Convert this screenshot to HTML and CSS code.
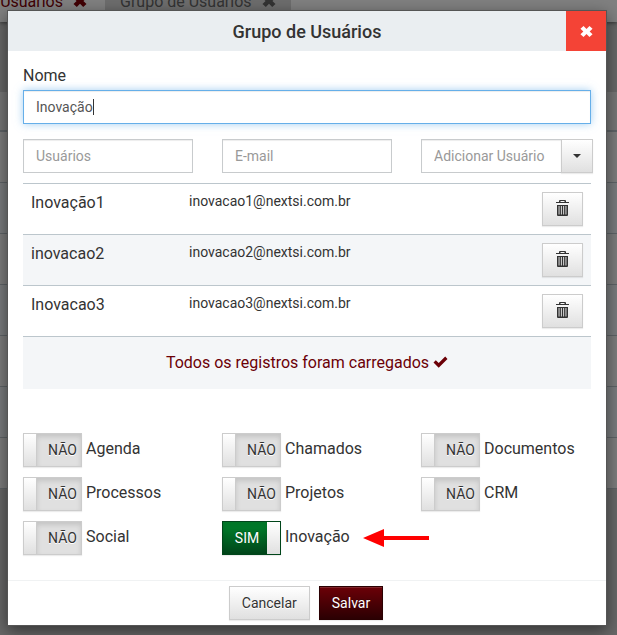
FILE: index.html
```html
<!DOCTYPE html>
<html lang="pt-BR">
<head>
<meta charset="utf-8">
<meta name="viewport" content="width=device-width, initial-scale=1">
<title>Grupo de Usuários</title>
<link rel="stylesheet" href="styles.css">
</head>
<body>
<svg class="defs" aria-hidden="true">
  <symbol id="times" viewBox="0 0 14 14"><path d="M3.800 1 7 4.200 10.200 1 13.500 4.100 10.400 7l3.100 2.900L10.200 13 7 9.800 3.800 13 .5 9.900 3.600 7 .5 4.100z"/></symbol>
  <symbol id="check" viewBox="0 0 14 12"><path d="M0 6.500 2.300 4.200 5.200 7.100 11.700.6 14 2.900 5.200 11.700z"/></symbol>
  <symbol id="trash" viewBox="0 0 13 16"><path fill-rule="evenodd" d="M3 2V1q0-1 1-1h5q1 0 1 1v1h3v1H0V2zM4.500 1v1h4V1zM1 5h11v10q0 1-1 1H2q-1 0-1-1zM2.600 6v8.500h.9V6zM4.900 6v8.500h.9V6zM7.200 6v8.500h.9V6zM9.500 6v8.500h.9V6z"/></symbol>
</svg>
<div class="page">
  <nav class="tabs">
    <span class="tab tab-first">Usuários <svg class="icon-tab"><use href="#times"/></svg></span>
    <span class="tab tab-current">Grupo de Usuários <svg class="icon-tab"><use href="#times"/></svg></span>
  </nav>
  <div class="page-list">
    <div class="list-head"></div>
    <div class="list-row"></div><div class="list-row"></div><div class="list-row"></div>
    <div class="list-row"></div><div class="list-row"></div><div class="list-row"></div>
    <div class="list-row"></div>
  </div>
</div>

<form class="dialog" role="dialog" aria-labelledby="title">
  <header class="dialog-head">
    <h1 id="title">Grupo de Usuários</h1>
    <button type="button" class="close" aria-label="Fechar"><svg class="icon-close"><use href="#times"/></svg></button>
  </header>
  <div class="dialog-body">
    <label class="name-label" for="nome">Nome</label>
    <div class="name-box">
      <input class="field field-focus" id="nome" type="text" value="Inovação">
      <span class="text-caret"></span>
    </div>
    <div class="columns filters">
      <input class="field" type="text" placeholder="Usuários" aria-label="Usuários">
      <input class="field" type="text" placeholder="E-mail" aria-label="E-mail">
      <div class="combo">
        <input class="field" type="text" placeholder="Adicionar Usuário" aria-label="Adicionar Usuário">
        <button type="button" class="btn combo-btn" aria-label="Abrir lista"><span class="caret"></span></button>
      </div>
    </div>
    <table class="users">
      <tbody>
        <tr><td class="user">Inovação1</td><td class="mail">inovacao1@nextsi.com.br</td><td class="action"><button type="button" class="btn btn-trash" aria-label="Excluir"><svg class="icon-trash"><use href="#trash"/></svg></button></td></tr>
        <tr><td class="user">inovacao2</td><td class="mail">inovacao2@nextsi.com.br</td><td class="action"><button type="button" class="btn btn-trash" aria-label="Excluir"><svg class="icon-trash"><use href="#trash"/></svg></button></td></tr>
        <tr><td class="user">Inovacao3</td><td class="mail">inovacao3@nextsi.com.br</td><td class="action"><button type="button" class="btn btn-trash" aria-label="Excluir"><svg class="icon-trash"><use href="#trash"/></svg></button></td></tr>
      </tbody>
      <tfoot>
        <tr><td class="loaded" colspan="3">Todos os registros foram carregados <svg class="icon-check"><use href="#check"/></svg></td></tr>
      </tfoot>
    </table>
    <div class="columns modules">
      <div class="module"><button type="button" class="switch" role="switch" aria-checked="false" aria-labelledby="m1"><span class="knob"></span><span class="state">NÃO</span></button><span id="m1">Agenda</span></div>
      <div class="module"><button type="button" class="switch" role="switch" aria-checked="false" aria-labelledby="m2"><span class="knob"></span><span class="state">NÃO</span></button><span id="m2">Chamados</span></div>
      <div class="module"><button type="button" class="switch" role="switch" aria-checked="false" aria-labelledby="m3"><span class="knob"></span><span class="state">NÃO</span></button><span id="m3">Documentos</span></div>
      <div class="module"><button type="button" class="switch" role="switch" aria-checked="false" aria-labelledby="m4"><span class="knob"></span><span class="state">NÃO</span></button><span id="m4">Processos</span></div>
      <div class="module"><button type="button" class="switch" role="switch" aria-checked="false" aria-labelledby="m5"><span class="knob"></span><span class="state">NÃO</span></button><span id="m5">Projetos</span></div>
      <div class="module"><button type="button" class="switch" role="switch" aria-checked="false" aria-labelledby="m6"><span class="knob"></span><span class="state">NÃO</span></button><span id="m6">CRM</span></div>
      <div class="module"><button type="button" class="switch" role="switch" aria-checked="false" aria-labelledby="m7"><span class="knob"></span><span class="state">NÃO</span></button><span id="m7">Social</span></div>
      <div class="module"><button type="button" class="switch switch-on" role="switch" aria-checked="true" aria-labelledby="m8"><span class="state">SIM</span><span class="knob"></span></button><span id="m8">Inovação</span><svg class="arrow" viewBox="0 0 66 18" aria-hidden="true"><path d="M0 9 21 0v7h45v4H21v7z"/></svg></div>
    </div>
  </div>
  <footer class="dialog-foot">
    <button type="button" class="btn">Cancelar</button>
    <button type="submit" class="btn btn-primary">Salvar</button>
  </footer>
</form>
</body>
</html>
```

FILE: styles.css
```css
* { box-sizing: border-box; }

body {
  margin: 0;
  min-height: 100vh;
  background: #686868;
  color: #333;
  font: 16px/24px Roboto, "Liberation Sans", sans-serif;
  overflow: hidden;
}

button, input { font: inherit; color: inherit; margin: 0; border-radius: 0; }
svg { fill: currentColor; }
.defs { position: absolute; width: 0; height: 0; }

/* Dimmed page behind the dialog */
.page { position: absolute; inset: 0; overflow: hidden; }
.tabs {
  display: flex;
  height: 22px;
  background: #808080;
  box-shadow: 0 1px 4px #333;
}
.tab { display: flex; flex: none; gap: 10px; line-height: 3px; white-space: nowrap; }
.tab-first { justify-content: flex-end; width: 105px; padding-right: 18px; color: #400004; }
.tab-current { width: 186px; padding-left: 15px; background: #6d6d6d; color: #333; }
.icon-tab { flex: none; width: 14px; height: 14px; margin-top: -6px; }
.page-list { margin-top: 70px; }
.list-head { height: 40px; background: #777; border-bottom: 2px solid #5f6467; }
.list-row { height: 51px; background: #7d7d7d; border-bottom: 1px solid #5f6467; }
.list-row:nth-child(odd) { background: #7a7c7e; }

/* Dialog */
.dialog {
  position: relative;
  margin: 10px 10px 9px 7px;
  border: 1px solid #555;
  background: #fff;
  box-shadow: 0 5px 15px rgba(0, 0, 0, .5);
}
.dialog-head { display: flex; height: 40px; background: #eaeef1; }
.dialog-head h1 {
  flex: 1;
  margin: 0;
  padding-left: 40px;
  font-size: 18px;
  font-weight: 500;
  line-height: 42px;
  text-align: center;
}
.close { display: grid; place-items: center; width: 40px; padding: 0; border: 0; background: #f44336; color: #fff; }
.icon-close { width: 13px; height: 13px; }
.dialog-body { padding: 13px 15px 25px; }
.name-label { display: block; margin-bottom: 2px; }
.name-box { position: relative; }
.text-caret { position: absolute; top: 9px; left: 70px; width: 1px; height: 16px; background: #333; }

.field {
  display: block;
  width: 100%;
  min-width: 0;
  height: 34px;
  padding: 6px 12px;
  border: 1px solid #c8cbcd;
  background: #fff;
  box-shadow: inset 0 1px 1px rgba(0, 0, 0, .075);
  color: #555;
  font-size: 14px;
  line-height: 20px;
  outline: 0;
}
.field::placeholder { color: #999; opacity: 1; }
.field-focus { border-color: #66afe9; box-shadow: inset 0 1px 1px rgba(0, 0, 0, .075), 0 0 8px rgba(102, 175, 233, .6); }

.columns { display: grid; grid-template-columns: repeat(3, minmax(0, 1fr)); column-gap: 29px; }
.filters { margin: 15px 0 10px; }
.combo { display: flex; margin-right: -2px; }
.combo .field { flex: 1; }

.btn {
  height: 34px;
  padding: 6px 12px;
  border: 1px solid #ccc;
  background: linear-gradient(#fff, #e0e0e0);
  box-shadow: inset 0 1px 0 rgba(255, 255, 255, .15), 0 1px 1px rgba(0, 0, 0, .075);
  font-size: 14px;
  line-height: 20px;
  text-shadow: 0 1px 0 #fff;
}
.btn-primary { border-color: #2a0002; background: linear-gradient(#6b0007, #2b0003); color: #fff; text-shadow: 0 -1px 0 rgba(0, 0, 0, .2); }
.combo-btn { display: grid; place-items: center; flex: none; width: 32px; margin-left: -1px; padding: 0; }
.caret { border: 4px solid transparent; border-top-color: #333; border-bottom: 0; }

.users { width: 100%; border-collapse: collapse; }
.users td { padding: 8px; border-top: 1px solid #bcc6cc; vertical-align: top; }
.users tr:nth-child(even), .users tfoot { background: #f4f6f8; }
.users .user { width: 158px; padding-top: 7px; }
.users .mail { font-size: 14px; line-height: 18px; }
.users .action { width: 57px; }
.btn-trash { display: grid; place-items: center; width: 41px; padding: 0 0 2px; }
.icon-trash { width: 13px; height: 16px; }
.users .loaded { padding: 14px 8px; color: #6b0007; text-align: center; }
.icon-check { width: 15px; height: 12px; }

.modules { row-gap: 10px; margin-top: 44px; }
.module { display: flex; gap: 4px; line-height: 32px; white-space: nowrap; }
.switch {
  display: flex;
  flex: none;
  width: 59px;
  height: 34px;
  padding: 0;
  border: 1px solid #ccc;
  background: #e0e0e0;
  box-shadow: 0 1px 1px rgba(0, 0, 0, .075);
  font-size: 14px;
  line-height: 32px;
}
.knob { width: 13px; height: 32px; border-right: 1px solid #ccc; background: linear-gradient(#fff, #e0e0e0); }
.state { flex: 1; height: 32px; padding-left: 7px; box-shadow: inset 0 3px 5px rgba(0, 0, 0, .125); text-align: center; text-shadow: 0 1px 0 #fff; }
.switch-on { border-color: #00451a; background: linear-gradient(#00852d, #00451a); color: #fff; }
.switch-on .state { padding: 0 0 0 4px; text-shadow: 0 -1px 0 rgba(0, 0, 0, .2); }
.switch-on .knob { border-right: 0; }
.arrow { flex: none; align-self: center; width: 66px; height: 18px; margin-left: 9px; fill: #f00; }

.dialog-foot { display: flex; justify-content: center; gap: 9px; padding: 5px 16px 5px 14px; border-top: 1px solid #f0f2f3; }
```
